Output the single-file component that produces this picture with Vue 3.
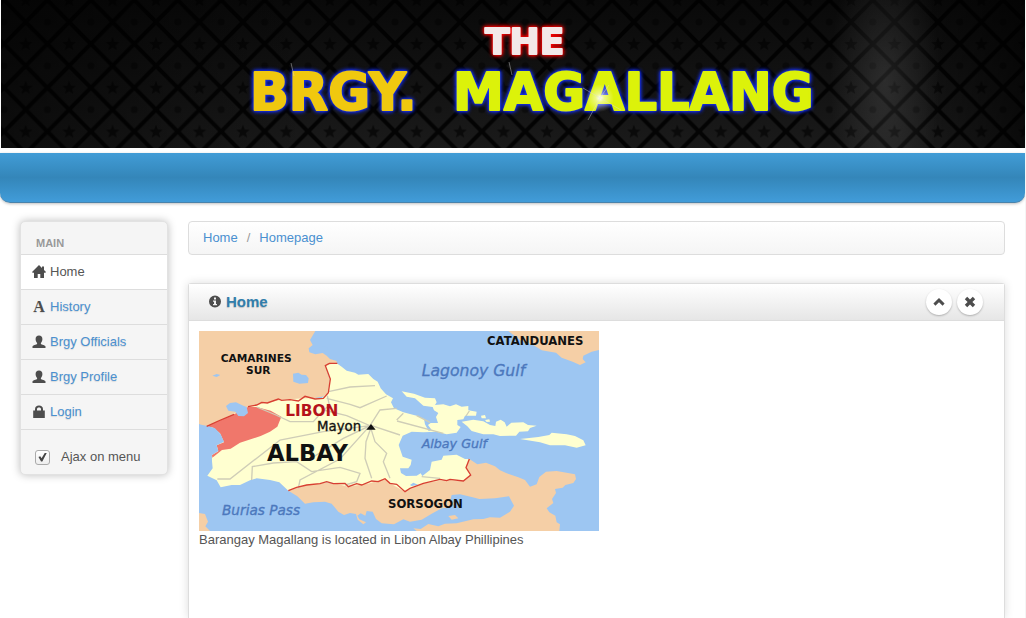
<script setup>
import { ref } from 'vue'

const ajax = ref(true)
const active = ref('Home')
const open = ref(true)
const shown = ref(true)

const links = [
  { label: 'Home', icon: 'home' },
  { label: 'History', icon: 'font' },
  { label: 'Brgy Officials', icon: 'user' },
  { label: 'Brgy Profile', icon: 'user' },
  { label: 'Login', icon: 'lock' }
]

const icons = {
  home: 'M7 0 0 7 1 8 2 7.4V13H5.7V9H8.3V13H12V7.4L13 8 14 7 12 5V1.4H10V3Z',
  user: 'M7 0.4C9.2 0.4 10.4 1.8 10.4 4 10.4 5.8 9.7 7.2 8.9 8V9C9.6 9.8 13.3 10 13.5 11.6V13H0.5V11.6C0.7 10 4.4 9.8 5.1 9V8C4.3 7.2 3.6 5.8 3.6 4 3.6 1.8 4.8 0.4 7 0.4Z',
  lock: 'M1.2 5.4H3V4.2C3 1.8 4.6 0.6 7 0.6S11 1.8 11 4.2V5.4H12.8V13H1.2ZM5 5.4H9V4.3C9 3.1 8.3 2.5 7 2.5S5 3.1 5 4.3Z'
}
</script>

<template>
  <div class="page">
    <header>
      <svg class="banner" viewBox="0 0 1024 148" role="img" aria-label="The Brgy. Magallang">
        <defs>
          <pattern id="tiles" x="3" y="22" width="43.44" height="43.8" patternUnits="userSpaceOnUse">
            <path d="M21.7 0 43.4 21.9 21.7 43.8 0 21.9Z" fill="none" stroke="#000" stroke-width="4" opacity=".85" />
            <path d="M21.7 15 23.5 20 28.5 20.2 24.6 23.3 26 28.2 21.7 25.4 17.4 28.2 18.8 23.3 14.9 20.2 19.9 20Z" fill="#000" opacity=".6" />
            <g fill="#000" opacity=".4">
              <circle r="3.5" /><circle cx="43.4" r="3.5" /><circle cy="43.8" r="3.5" /><circle cx="43.4" cy="43.8" r="3.5" />
            </g>
          </pattern>
          <linearGradient id="depth" x2="0" y2="1">
            <stop offset="0" stop-color="#090909" /><stop offset="1" stop-color="#1a1a1a" />
          </linearGradient>
          <linearGradient id="edges">
            <stop offset="0" stop-color="#000" stop-opacity=".5" />
            <stop offset=".3" stop-color="#000" stop-opacity="0" />
            <stop offset=".9" stop-color="#000" stop-opacity="0" />
            <stop offset="1" stop-color="#000" stop-opacity=".6" />
          </linearGradient>
          <radialGradient id="beam">
            <stop offset="0" stop-color="#fff" stop-opacity=".11" /><stop offset="1" stop-color="#fff" stop-opacity="0" />
          </radialGradient>
          <radialGradient id="spark">
            <stop offset="0" stop-color="#fff" /><stop offset=".3" stop-color="#fff" stop-opacity=".5" /><stop offset="1" stop-color="#fff" stop-opacity="0" />
          </radialGradient>
        </defs>
        <rect width="1024" height="148" fill="url(#depth)" />
        <rect width="1024" height="148" fill="url(#tiles)" />
        <rect width="1024" height="148" fill="url(#edges)" />
        <ellipse cx="884" cy="80" rx="55" ry="150" fill="url(#beam)" />
        <text class="the" x="484" y="54">THE</text>
        <text class="brgy" x="249" y="110">BRGY.</text>
        <text class="magallang" x="452" y="110">MAGALLANG</text>
        <circle cx="599" cy="98" r="14" fill="url(#spark)" />
        <path d="M599 98 587 120M599 98 620 110M599 98 608 85M599 98 582 88M290 63 293 76M508 62 511 75" stroke="#ddd" stroke-width=".7" opacity=".6" />
      </svg>
      <nav class="navbar" aria-label="Top"></nav>
    </header>

    <div class="layout">
      <aside class="sidebar">
        <h2>Main</h2>
        <ul>
          <li v-for="link in links" :key="link.label" :class="{ active: active === link.label }">
            <a href="#" @click.prevent="active = link.label">
              <span v-if="link.icon === 'font'" class="icon letter" aria-hidden="true">A</span>
              <svg v-else class="icon" viewBox="0 0 14 14" aria-hidden="true"><path :d="icons[link.icon]" fill-rule="evenodd" /></svg>
              <span>{{ link.label }}</span>
            </a>
          </li>
        </ul>
        <label class="ajax"><input v-model="ajax" type="checkbox"><span>Ajax on menu</span></label>
      </aside>

      <main>
        <div class="breadcrumb">
          <a href="#">Home</a><span>/</span><a href="#">Homepage</a>
        </div>

        <section v-if="shown" class="box">
          <div class="box-header">
            <h1>
              <svg class="icon" viewBox="0 0 14 14" aria-hidden="true">
                <path d="M7 0.5A6 6 0 1 1 7 12.5A6 6 0 1 1 7 0.5ZM6 2.5V4.5H8V2.5ZM5 5.5V6.7H6V9.1H5V10.3H9V9.1H8V5.5Z" fill-rule="evenodd" />
              </svg>
              Home
            </h1>
            <button type="button" aria-label="Collapse" @click="open = !open">
              <svg viewBox="0 0 14 14" aria-hidden="true"><path d="M7 3 12.6 8.6 10.6 10.8 7 7.2 3.4 10.8 1.4 8.6Z" /></svg>
            </button>
            <button type="button" aria-label="Close" @click="shown = false">
              <svg viewBox="0 0 14 14" aria-hidden="true"><path d="M4.2 1.8 7 4.6 9.8 1.8 12.2 4.2 9.4 7 12.2 9.8 9.8 12.2 7 9.4 4.2 12.2 1.8 9.8 4.6 7 1.8 4.2Z" /></svg>
            </button>
          </div>
          <div v-if="open" class="box-content">
            <svg class="map" viewBox="0 0 1200 600" role="img" aria-label="Map of Albay">
              <rect width="1200" height="600" fill="#9dc6f2" />
              <g transform="translate(-27 -18)">
                <g fill="#f5cfa6">
                  <path d="M27 18H376L360 45 368 60 356 70 358 82 376 88 398 84 410 92 420 102 440 108V118L406 124 420 165 412 212 200 250 50 308 27 298Z" />
                  <path d="M295 497 355 470 475 478 585 455 645 495 750 455 838 402 862 418 888 413 915 424 930 436 950 445 985 457 1005 465 1020 485 1040 478 1048 456 1068 440 1100 438 1155 448 1158 462 1150 474 1126 480 1118 488 1095 492 1098 504 1086 522 1090 534 1070 550 1078 562 1096 572 1100 592 1110 598 1108 618H680L670 610 692 612 715 597 745 604 765 596 800 595 850 583 880 582 900 577 930 578 960 560 972 542 957 514 915 520 868 522 845 516 810 508 785 510 782 522 792 536 785 545 755 550 725 566 695 584 660 590 640 583 612 598 575 595 558 582 548 560 530 558 526 572 512 565 502 572 508 583 528 592 520 598 503 584 498 567 480 564 462 570 445 560 425 536 405 530 370 532 345 536 322 514Z" />
                  <path d="M955 18H1227V75L1205 80 1180 92 1178 102 1187 112 1170 120 1148 110 1115 98 1098 83 1055 76 1030 60 990 45Z" />
                  <path d="M27 564 45 567 54 590 46 604 60 618H27Z" /><path d="M775 573 795 570 805 580 785 584Z" />
                </g>
                <g fill="#ffffd0">
                  <path d="M406 120 440 115 455 125 470 137 495 143 505 149 535 147 550 162 563 170 572 190 588 208 609 220 603 232 612 250 640 262 680 272 702 282 705 298 716 318 725 315 714 300 722 294 744 294 738 276 745 264 732 256 728 246 700 242 675 220 650 215 635 199 672 206 705 218 735 220 740 232 735 240 760 238 780 244 798 238 815 245 835 243 835 256 860 260 858 272 825 272 820 283 802 285 802 300 812 306 800 323 770 328 740 320 700 322 665 320 638 332 626 360 638 395 665 404 662 420 655 430 630 430 633 444 648 453 680 452 692 445 697 453 720 435 725 410 755 404 760 392 800 389 825 402 838 402 828 428 842 450 820 468 770 464 700 475 645 500 600 475 585 460 540 475 475 485 420 472 355 478 295 497 268 472 240 465 200 460 180 466 150 480 125 480 92 487 80 466 52 452 68 430 65 398 60 300 175 245 200 240 270 225 340 220 395 220 412 205 420 165Z" />
                  <path d="M815 290 850 284 880 289 900 300 916 303 918 290 932 284 944 292 950 305 964 293 1000 292 1014 300 1040 302 1020 309 1014 319 988 320 978 332 930 333 910 328 880 328 845 318 832 304Z" />
                  <path d="M990 342 1045 336 1078 330 1085 323 1130 328 1155 333 1180 346 1187 361 1160 368 1125 361 1080 361 1050 352Z" />
                  <path d="M873 272 885 270 888 280 875 280Z" /><path d="M885 285 898 283 900 290 890 291Z" />
                </g>
                <path d="M50 304 85 288 132 268 175 245 200 246 242 257 274 275 262 305 240 320 212 333 150 353 122 371 96 375 67 398 66 390 85 379 80 361 102 352 90 325 70 308Z" fill="#f0776b" />
                <path d="M108 243 120 234 138 232 160 242 170 246 174 264 162 274 145 273 136 260 115 257ZM309 146 325 143 335 149 348 150 356 160 354 174 328 176 310 170ZM67 152 80 147 91 150 80 156ZM386 70 402 64 413 70 408 78 390 76ZM660 480 670 473 684 479 665 483ZM27 298 55 304 75 310 92 328 102 350 80 361 85 378 66 390 65 410 27 430Z" fill="#9dc6f2" />
                <path d="M200 246 258 270 300 290 370 290 395 262 418 240 412 212M415 200 480 186 555 182M410 220 480 238 510 248 590 213M400 255 470 272 540 302 460 340 360 402M540 302 400 320 270 345 120 462H82M540 302 450 402 330 465 325 490M540 302 555 350 590 385 580 410 600 460M545 302 528 350 525 400 545 460M540 302 570 255 620 250M545 302 630 330M185 465 187 425 250 414 320 410 365 440 450 427 510 445 500 470 465 480M621 288 760 325M640 265 620 285M680 272 720 292M838 258 828 273M695 455 750 460" fill="none" stroke="#cfcdb7" stroke-width="4" />
                <path d="M50 304 85 288 132 268M174 245 200 240 215 232 232 234 265 222 275 226 300 224 325 228 345 214 375 222 400 220 415 203 421 162 406 122 418 115H442M295 497 320 487 350 480 390 476 410 470 430 476 465 475 475 485 500 476 515 480 545 468 565 470 585 461 600 475 620 478 645 500 660 490 700 475 750 463 770 467 780 463 820 468 842 450 828 428 838 402" fill="none" stroke="#d83f32" stroke-width="4" />
                <path d="M543 297 557 314H529Z" fill="#111" />
                <g class="places">
                  <text class="camarines" x="92" y="111">CAMARINES</text>
                  <text class="camarines" x="168" y="148">SUR</text>
                  <text x="891" y="61">CATANDUANES</text>
                  <text x="594" y="549">SORSOGON</text>
                  <text class="libon" x="286" y="273">LIBON</text>
                  <text class="albay" x="231" y="407">ALBAY</text>
                  <text class="mayon" x="381" y="318">Mayon</text>
                </g>
                <g class="waters">
                  <text class="lagonoy" x="695" y="154">Lagonoy Gulf</text>
                  <text class="gulf" x="695" y="369">Albay Gulf</text>
                  <text class="burias" x="96" y="570">Burias Pass</text>
                </g>
              </g>
            </svg>
            <p>Barangay Magallang is located in Libon Albay Phillipines</p>
          </div>
        </section>
      </main>
    </div>
  </div>
</template>

<style>
body {
  margin: 0;
  background: #fff;
}
</style>

<style scoped>
* {
  box-sizing: border-box;
}
.page {
  display: flex;
  flex-direction: column;
  height: 100vh;
  overflow: hidden;
  border-right: 1px solid #f5f5f5;
  color: #555;
  font: 13px/18px "Liberation Sans", Arial, sans-serif;
}
a {
  color: #4a90d0;
  text-decoration: none;
}
.banner {
  display: block;
  width: calc(100% - 1px);
  margin-left: 1px;
}
.banner text {
  font-family: "DejaVu Sans", sans-serif;
  font-weight: bold;
  font-size: 51px;
  stroke-width: 2px;
  stroke-linejoin: round;
}
.banner .the {
  fill: #f3e8e8;
  stroke: #f3e8e8;
  font-size: 36px;
  filter: drop-shadow(0 0 2px #f00) drop-shadow(0 0 1px #f00);
}
.brgy,
.magallang {
  fill: #f0c80f;
  stroke: #f0c80f;
  filter: drop-shadow(0 0 2px #1430ff) drop-shadow(0 0 1px #1430ff);
}
.magallang {
  fill: #dcf20a;
  stroke: #dcf20a;
}
.navbar {
  height: 50px;
  margin-top: 5px;
  border-bottom: 1px solid #4a83ab;
  border-radius: 0 0 10px 10px;
  background: linear-gradient(#419cd6, #3486b9 50%, #419cd9);
  box-shadow: 0 1px 3px rgba(0, 0, 0, .25);
}
.layout {
  display: flex;
  flex: 1;
  gap: 20px;
  padding: 18px 20px 0;
}
.sidebar {
  flex: 0 0 148px;
  align-self: flex-start;
  border: 1px solid #e2e2e2;
  border-radius: 5px;
  background: #f5f5f5;
  box-shadow: 0 0 8px #bdbdbd;
}
.sidebar h2 {
  margin: 0;
  padding: 12px 15px 2px;
  color: #999;
  font-size: 11px;
  line-height: 18px;
  text-transform: uppercase;
  text-shadow: 0 1px 0 rgba(255, 255, 255, .5);
}
.sidebar ul {
  margin: 0;
  padding: 0;
  border-top: 1px solid #ddd;
  list-style: none;
}
.sidebar li {
  border-bottom: 1px solid #ddd;
}
.sidebar li a {
  display: flex;
  align-items: center;
  gap: 4px;
  padding: 8px 11px;
  text-shadow: 0 1px 1px rgba(0, 0, 0, .12);
}
.sidebar .active {
  background: #fff;
}
.sidebar .active a {
  color: #555;
  text-shadow: none;
}
.icon {
  flex: none;
  width: 14px;
  height: 14px;
  fill: #4d4d4d;
}
.letter {
  color: #4d4d4d;
  font: bold 16px/14px "Liberation Serif", serif;
  text-align: center;
}
.ajax {
  display: flex;
  align-items: center;
  gap: 11px;
  padding: 18px 14px 8px;
}
.ajax input {
  display: grid;
  place-items: center;
  width: 15px;
  height: 15px;
  margin: 0;
  border: 1px solid #aaa;
  border-radius: 3px;
  appearance: none;
  background: linear-gradient(#fff, #eee);
}
.ajax input:checked::after {
  content: "";
  width: 9px;
  height: 9px;
  background: #444;
  clip-path: polygon(5% 50%, 25% 42%, 40% 65%, 78% 0, 100% 0, 48% 100%, 34% 100%);
}
main {
  display: flex;
  flex: 1;
  flex-direction: column;
  min-width: 0;
}
.breadcrumb {
  display: flex;
  gap: 9px;
  margin-bottom: 28px;
  padding: 7px 14px;
  border: 1px solid #ddd;
  border-radius: 4px;
  background: linear-gradient(#fff, #f5f5f5);
}
.breadcrumb span {
  color: #999;
}
.box {
  flex: 1;
  border: 1px solid #ddd;
  border-bottom: 0;
  border-radius: 3px 3px 0 0;
  box-shadow: 0 0 10px #ddd;
}
.box-header {
  display: flex;
  align-items: center;
  gap: 5px;
  height: 37px;
  padding: 0 21px 0 19px;
  border-bottom: 1px solid #ddd;
  background: linear-gradient(#fff, #e6e6e6);
}
h1 {
  display: flex;
  flex: 1;
  align-items: center;
  gap: 4px;
  margin: 0;
  color: #317eac;
  font-size: 15px;
  line-height: 18px;
  text-shadow: 0 1px 1px rgba(0, 0, 0, .2);
}
button {
  display: grid;
  place-items: center;
  width: 26px;
  height: 26px;
  padding: 0;
  border: 0;
  border-radius: 50%;
  background: #fff;
  box-shadow: 0 1px 2px rgba(0, 0, 0, .25);
}
button svg {
  width: 14px;
  height: 14px;
  fill: #4d4d4d;
}
.box-content {
  padding: 10px;
}
.map {
  display: block;
  width: 100%;
  max-width: 400px;
}
.map text {
  font-family: "DejaVu Sans", sans-serif;
}
.places text {
  fill: #111;
  font-size: 35px;
  font-weight: bold;
}
.places .camarines {
  font-size: 32px;
}
.places .libon {
  fill: #b5121b;
  font-size: 46px;
}
.places .albay {
  font-size: 68px;
}
.places .mayon {
  font-size: 40px;
  font-weight: normal;
  stroke: #111;
  stroke-width: 1px;
}
.waters text {
  fill: #4c78bd;
  stroke: #4c78bd;
  stroke-width: 1px;
  font-size: 41px;
  font-style: italic;
}
.waters .lagonoy {
  font-size: 47px;
}
.waters .gulf {
  font-size: 38px;
}
p {
  margin: 0;
}
</style>
